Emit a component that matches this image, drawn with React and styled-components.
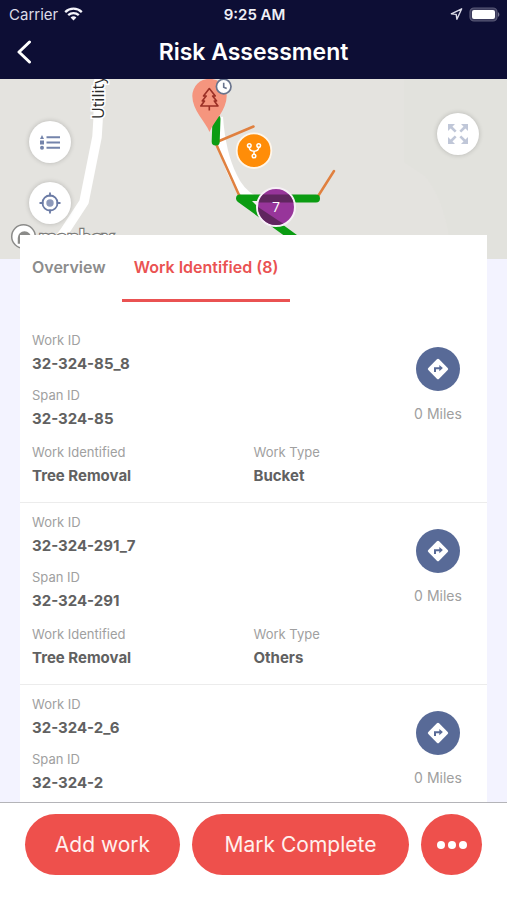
import React, { useState } from 'react';
import styled, { createGlobalStyle, css } from 'styled-components';

const GlobalStyle = createGlobalStyle`
  * {
    box-sizing: border-box;
  }
  body {
    margin: 0;
    background: #f3f3ff;
    font-family: Inter, 'Open Sans', sans-serif;
  }
  button {
    border: none;
    padding: 0;
    font-family: inherit;
    cursor: pointer;
  }
`;

const Screen = styled.div`
  display: flex;
  flex-direction: column;
  height: 100vh;
`;

const Header = styled.header`
  flex: none;
  background: #0d0e35;
  color: #fff;
`;

const StatusBar = styled.div`
  display: grid;
  grid-template-columns: 1fr auto 1fr;
  align-items: center;
  height: 28px;
  padding: 0 7px 0 9px;
  font-size: 15px;
`;

const StatusGroup = styled.div`
  display: flex;
  align-items: center;
  gap: 6px;
  color: #dcdce8;
  justify-content: ${({ $end }) => ($end ? 'flex-end' : 'flex-start')};
`;

const Clock = styled.span`
  font-weight: 600;
  color: #f0f0f6;
`;

const TitleBar = styled.div`
  display: grid;
  grid-template-columns: 48px 1fr 48px;
  align-items: center;
  height: 51px;
  padding-bottom: 4px;
`;

const BackButton = styled.button`
  display: flex;
  align-items: center;
  justify-content: center;
  height: 44px;
  background: none;
  color: #fff;
`;

const Title = styled.h1`
  margin: 0;
  font-size: 23px;
  line-height: 32px;
  font-weight: 600;
  text-align: center;
`;

const Content = styled.main`
  flex: 1;
  min-height: 0;
  overflow-y: auto;
  scrollbar-width: none;
`;

const MapArea = styled.section`
  position: relative;
  height: 180px;
  overflow: hidden;
  background: #e4e3df;
`;

const MapDrawing = styled.svg`
  display: block;
  width: 100%;
  height: 100%;
`;

const MapControls = styled.div`
  position: absolute;
  display: flex;
  flex-direction: column;
  gap: 19px;
  ${({ $side }) =>
    $side === 'left'
      ? css`
          top: 42px;
          left: 29px;
        `
      : css`
          top: 34px;
          right: 28px;
        `}
`;

const MapButton = styled.button`
  display: flex;
  align-items: center;
  justify-content: center;
  width: 42px;
  height: 42px;
  border-radius: 50%;
  background: #fff;
  box-shadow: 0 0 5px rgba(0, 0, 0, 0.2);
`;

const Card = styled.section`
  position: relative;
  margin: -24px 20px 0;
  background: #fff;
`;

const Tabs = styled.div`
  display: flex;
  gap: 4px;
  padding-bottom: 19px;
`;

const Tab = styled.button`
  height: 67px;
  padding: 0 12px;
  background: none;
  border-bottom: 3px solid ${({ $active }) => ($active ? '#ea5252' : 'transparent')};
  color: ${({ $active }) => ($active ? '#ea5252' : '#8c8c8c')};
  font-size: 16px;
  font-weight: 600;
`;

const WorkList = styled.ul`
  margin: 0;
  padding: 0;
  list-style: none;
`;

const WorkItem = styled.li`
  display: grid;
  grid-template-columns: 1fr 1fr;
  padding: 11px 12px 16px;
  border-bottom: 1px solid #ececec;
`;

const Ids = styled.dl`
  display: flex;
  flex-direction: column;
  gap: 13px;
  margin: 0 0 15px;
`;

const Details = styled.dl`
  display: grid;
  grid-column: 1 / -1;
  grid-template-columns: 1fr 1fr;
  margin: 0;
`;

const Label = styled.dt`
  margin-bottom: 6px;
  font-size: 13px;
  line-height: 16px;
  color: #a0a0a0;
`;

const Value = styled.dd`
  margin: 0;
  font-size: 15px;
  line-height: 20px;
  font-weight: 700;
  color: #616161;
`;

const Distance = styled.div`
  display: flex;
  flex-direction: column;
  align-items: center;
  justify-self: end;
  gap: 15px;
  width: 74px;
  padding-top: 15px;
  font-size: 14px;
  line-height: 16px;
  color: #a0a0a0;
`;

const DirectionsButton = styled.button`
  display: flex;
  align-items: center;
  justify-content: center;
  width: 44px;
  height: 44px;
  border-radius: 50%;
  background: #586a97;
`;

const Footer = styled.footer`
  position: relative;
  display: flex;
  flex: none;
  gap: 12px;
  padding: 11px 25px 25px;
  border-top: 1px solid #b4b4b8;
  background: #fff;
`;

const ActionButton = styled.button`
  flex: ${({ $grow }) => $grow} 1 0;
  height: 61px;
  border-radius: 31px;
  background: #ee504c;
  color: #fff0ee;
  font-size: 21px;
`;

const MoreButton = styled(ActionButton)`
  display: flex;
  flex: none;
  align-items: center;
  justify-content: center;
  width: 61px;
`;

const works = [
  { id: '32-324-85_8', span: '32-324-85', identified: 'Tree Removal', type: 'Bucket', miles: 0 },
  { id: '32-324-291_7', span: '32-324-291', identified: 'Tree Removal', type: 'Others', miles: 0 },
  { id: '32-324-2_6', span: '32-324-2', miles: 0 },
];

const WifiIcon = () => (
  <svg width="19" height="14" viewBox="0 0 19 14" fill="none" stroke="#f4f4fa" strokeWidth="2.3" aria-hidden="true">
    <path d="M1.2 5.1C5.9.5 13.1.5 17.8 5.1" />
    <path d="M4.2 8.2c3-2.9 7.6-2.9 10.6 0" />
    <path d="M6.6 10.5c1.7-1.6 4.1-1.6 5.8 0L9.5 13.6z" fill="#f4f4fa" stroke="none" />
  </svg>
);

const LocationIcon = () => (
  <svg width="13" height="12" viewBox="0 0 12 12" fill="none" stroke="#dcdce8" strokeWidth="1.4" strokeLinejoin="round" aria-hidden="true">
    <path d="M11.2.8.8 5.8l4.9.6.7 4.8z" />
  </svg>
);

const BatteryIcon = () => (
  <svg width="31" height="15" viewBox="0 0 31 15" aria-hidden="true">
    <rect x="1" y="1" width="27" height="13" rx="4" fill="#3b3b5c" stroke="#5a5a78" strokeWidth="1.2" />
    <rect x="3" y="3" width="23" height="9" rx="2" fill="#fff" />
    <path d="M29 5.2c1.8.6 1.8 4 0 4.6z" fill="#74748e" />
  </svg>
);

const BackIcon = () => (
  <svg width="16" height="24" viewBox="0 0 16 24" fill="none" stroke="currentColor" strokeWidth="3" strokeLinecap="round" strokeLinejoin="round" aria-hidden="true">
    <path d="M13.5 2 3 12l10.5 10" />
  </svg>
);

const ListIcon = () => (
  <svg width="20" height="15" viewBox="0 0 20 15" fill="#7484ab" aria-hidden="true">
    <path d="M2 0 4 4H0zM0 5.5h4v4H0z" />
    <circle cx="2" cy="12.7" r="2" />
    <path d="M6.5 1.2H20v2H6.5zM6.5 6.5H20v2H6.5zM6.5 11.7H20v2H6.5z" />
  </svg>
);

const LocateIcon = () => (
  <svg width="22" height="22" viewBox="0 0 22 22" fill="none" stroke="#6b7ba5" strokeWidth="1.8" aria-hidden="true">
    <circle cx="11" cy="11" r="7.5" />
    <circle cx="11" cy="11" r="3.7" fill="#8d99ba" stroke="none" />
    <path d="M11 .5v4M11 17.5v4M.5 11h4M17.5 11h4" />
  </svg>
);

const ExpandIcon = () => (
  <svg width="20" height="20" viewBox="0 0 20 20" fill="none" aria-hidden="true">
    <g fill="#c0c7d8">
      <path d="M0 0h7L4.8 2.2 0 7zM20 0h-7l2.2 2.2L20 7zM0 20h7l-2.2-2.2L0 13zM20 20h-7l2.2-2.2L20 13z" />
    </g>
    <path d="m3 3 4.700 4.700M17 3l-4.700 4.700M3 17l4.700-4.700M17 17l-4.700-4.700" stroke="#c0c7d8" strokeWidth="2.6" />
  </svg>
);

const DirectionsIcon = () => (
  <svg width="22" height="22" viewBox="0 0 22 22" aria-hidden="true">
    <path d="M9.9 1.3a1.6 1.6 0 0 1 2.2 0l8.6 8.6a1.6 1.6 0 0 1 0 2.2l-8.6 8.6a1.6 1.6 0 0 1-2.2 0l-8.6-8.6a1.6 1.6 0 0 1 0-2.2z" fill="#fff" />
    <path d="M8 14v-3.8h5" fill="none" stroke="#586a97" strokeWidth="2" />
    <path d="M12.3 6.9v6.4l3.6-3.2z" fill="#586a97" />
  </svg>
);

const MoreIcon = () => (
  <svg width="30" height="8" viewBox="0 0 30 8" fill="#fff" aria-hidden="true">
    <circle cx="4" cy="4" r="4" />
    <circle cx="15" cy="4" r="4" />
    <circle cx="26" cy="4" r="4" />
  </svg>
);

const SiteMap = () => (
  <MapDrawing viewBox="0 0 507 180" preserveAspectRatio="xMidYMin slice" role="img" aria-label="Work map">
    <defs>
      <clipPath id="cluster">
        <circle cx="276" cy="128" r="18" />
      </clipPath>
    </defs>
    <path d="M404 0h103v180h-56c-1-34-11-65-26-83l-21-14z" fill="#e2e2dd" />

    {/* roads */}
    <path d="M99 0 98 42 97 58 84 123 65 152 44 180" fill="none" stroke="#fff" strokeWidth="9.5" strokeLinejoin="round" />
    <path d="M219 38c2 28 7 45 14 59 4 9 10 17 20 23" fill="none" stroke="#fff" strokeWidth="8" />
    <text
      transform="translate(104 40) rotate(-90)"
      fontFamily="'Open Sans', sans-serif"
      fontSize="16"
      fill="#2b2b2b"
      stroke="#fff"
      strokeWidth="3"
      paintOrder="stroke"
    >
      Utility
    </text>

    {/* spans */}
    <g fill="none" stroke="#e0803f" strokeWidth="2.5" strokeLinecap="round">
      <path d="M218 62.5 253.5 47.5M216.500 66 239 116M317.500 118 334 92" />
    </g>
    <g fill="none" stroke="#0b9c12" strokeWidth="8" strokeLinecap="round" strokeLinejoin="round">
      <path d="M215.700 62.500 216.500 40M316 119.500H240L297 161" />
      <path d="M240 119.500 257 130V120z" fill="#0b9c12" strokeWidth="2" />
    </g>
    <path d="m252 122 8 8v-8z" fill="#f2f2ef" />

    {/* tree pin */}
    <path d="M209.500 53C205 42 192.300 31 192.300 17a17.200 17.200 0 0 1 34.400 0c0 14-12.700 25-17.200 36z" fill="#f5957e" />
    <path
      d="M209.300 9.500 203.500 17h2.700l-4 5h2.300L200.800 27h17.200l-3.700-5h2.300l-4-5h2.700zM209.300 27v4.500"
      fill="none"
      stroke="#9b3026"
      strokeWidth="1.6"
      strokeLinejoin="round"
    />
    <circle cx="223.7" cy="7.5" r="7.3" fill="#fff" stroke="#69748d" strokeWidth="1.7" />
    <path d="M223.700 3.800v4.500l3 1.300" fill="none" stroke="#69748d" strokeWidth="1.6" />

    {/* branch marker */}
    <circle cx="254" cy="71.7" r="17.3" fill="#ff8d08" stroke="#fff6ea" strokeWidth="1.8" />
    <g fill="none" stroke="#fff" strokeWidth="1.5">
      <circle cx="249.3" cy="66.5" r="1.8" />
      <circle cx="258.7" cy="66.5" r="1.8" />
      <circle cx="254" cy="77" r="1.8" />
      <path d="M249.300 68.300c0 3 1.500 3.900 4.700 3.900s4.700-.9 4.700-3.900M254 72.200v3" />
    </g>

    {/* cluster */}
    <circle cx="276" cy="128" r="19" fill="#97359a" stroke="#f7f0f7" strokeWidth="2" />
    <g clipPath="url(#cluster)" stroke="#60265f">
      <path d="M250 119.500h50" strokeWidth="8" />
      <path d="M250 130 300 163" strokeWidth="12" />
    </g>
    <text x="276" y="133" textAnchor="middle" fontFamily="'Open Sans', sans-serif" fontSize="14" fill="#fff">
      7
    </text>

    {/* attribution */}
    <g fill="#fff" stroke="#8b8b89" strokeWidth="1.5">
      <circle cx="23.5" cy="157.5" r="11.8" />
      <path d="M18.500 164v-5a6 6 0 0 1 12 0v5z" fill="#8b8b89" />
    </g>
    <text
      x="39"
      y="166"
      fontFamily="Lato, sans-serif"
      fontSize="21"
      fontWeight="700"
      fill="#fff"
      stroke="#7c7c7a"
      strokeWidth="2.5"
      paintOrder="stroke"
    >
      mapbox
    </text>
  </MapDrawing>
);

const WorkRow = ({ work }) => (
  <WorkItem>
    <Ids>
      <div>
        <Label>Work ID</Label>
        <Value>{work.id}</Value>
      </div>
      <div>
        <Label>Span ID</Label>
        <Value>{work.span}</Value>
      </div>
    </Ids>
    <Distance>
      <DirectionsButton type="button" aria-label="Directions">
        <DirectionsIcon />
      </DirectionsButton>
      <span>{work.miles} Miles</span>
    </Distance>
    {work.identified && (
      <Details>
        <div>
          <Label>Work Identified</Label>
          <Value>{work.identified}</Value>
        </div>
        <div>
          <Label>Work Type</Label>
          <Value>{work.type}</Value>
        </div>
      </Details>
    )}
  </WorkItem>
);

const App = () => {
  const [tab, setTab] = useState('work');

  return (
    <Screen>
      <GlobalStyle />
      <Header>
        <StatusBar>
          <StatusGroup>
            <span>Carrier</span>
            <WifiIcon />
          </StatusGroup>
          <Clock>9:25 AM</Clock>
          <StatusGroup $end>
            <LocationIcon />
            <BatteryIcon />
          </StatusGroup>
        </StatusBar>
        <TitleBar>
          <BackButton type="button" aria-label="Back">
            <BackIcon />
          </BackButton>
          <Title>Risk Assessment</Title>
        </TitleBar>
      </Header>

      <Content>
        <MapArea>
          <SiteMap />
          <MapControls $side="left">
            <MapButton type="button" aria-label="Legend">
              <ListIcon />
            </MapButton>
            <MapButton type="button" aria-label="My location">
              <LocateIcon />
            </MapButton>
          </MapControls>
          <MapControls $side="right">
            <MapButton type="button" aria-label="Full screen">
              <ExpandIcon />
            </MapButton>
          </MapControls>
        </MapArea>

        <Card>
          <Tabs role="tablist">
            <Tab type="button" role="tab" aria-selected={tab === 'overview'} $active={tab === 'overview'} onClick={() => setTab('overview')}>
              Overview
            </Tab>
            <Tab type="button" role="tab" aria-selected={tab === 'work'} $active={tab === 'work'} onClick={() => setTab('work')}>
              Work Identified (8)
            </Tab>
          </Tabs>
          {tab === 'work' && (
            <WorkList>
              {works.map((work) => (
                <WorkRow key={work.id} work={work} />
              ))}
            </WorkList>
          )}
        </Card>
      </Content>

      <Footer>
        <ActionButton type="button" $grow={5}>
          Add work
        </ActionButton>
        <ActionButton type="button" $grow={7}>
          Mark Complete
        </ActionButton>
        <MoreButton type="button" aria-label="More actions">
          <MoreIcon />
        </MoreButton>
      </Footer>
    </Screen>
  );
};

export default App;
